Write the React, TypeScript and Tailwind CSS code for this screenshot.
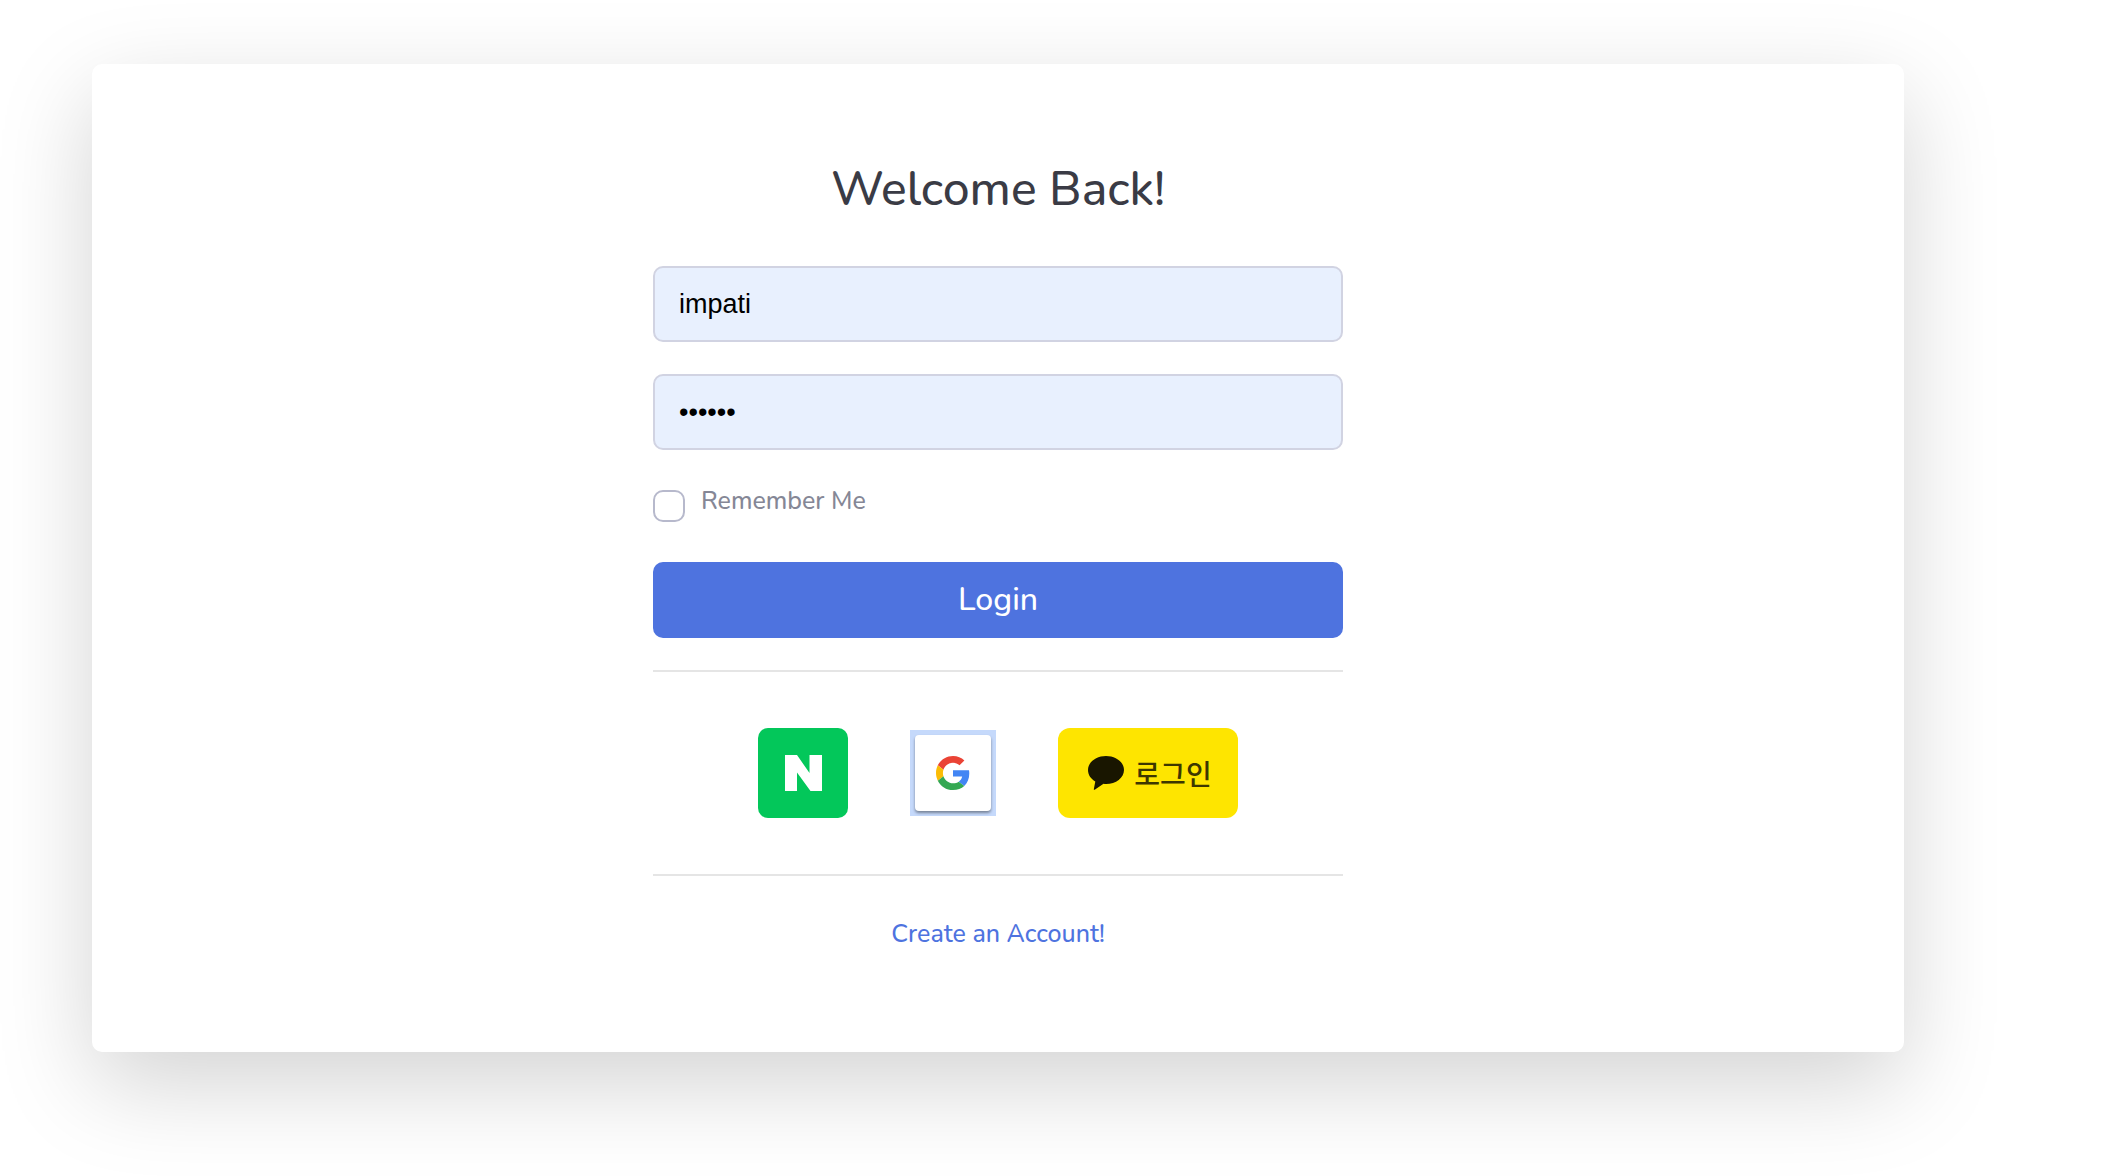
import { useState } from "react";

function NaverMark() {
  return (
    <svg viewBox="0 0 37 36" className="h-9 w-[37px]" aria-hidden="true">
      <path d="M0 0H12L24.5 18V0H37V36H25.5L12 17.500V36H0Z" fill="#fff" />
    </svg>
  );
}

function GoogleMark() {
  return (
    <svg viewBox="0 0 48 48" className="h-[34px] w-[34px]" aria-hidden="true">
      <path fill="#EA4335" d="M24 9.5c3.54 0 6.71 1.22 9.21 3.6l6.85-6.85C35.9 2.38 30.47 0 24 0 14.62 0 6.51 5.38 2.56 13.22l7.98 6.19C12.43 13.72 17.74 9.500 24 9.500z" />
      <path fill="#4285F4" d="M46.98 24.55c0-1.57-.15-3.09-.38-4.55H24v9.02h12.94c-.58 2.96-2.26 5.48-4.78 7.180l7.730 6c4.510-4.180 7.090-10.360 7.090-17.650z" />
      <path fill="#FBBC05" d="M10.530 28.590c-.480-1.450-.760-2.990-.760-4.590s.270-3.140.760-4.590l-7.980-6.190C.920 16.460 0 20.120 0 24c0 3.880.920 7.540 2.560 10.780l7.970-6.190z" />
      <path fill="#34A853" d="M24 48c6.480 0 11.930-2.130 15.890-5.810l-7.730-6c-2.150 1.450-4.920 2.300-8.160 2.300-6.260 0-11.570-4.220-13.470-9.910l-7.980 6.190C6.510 42.620 14.620 48 24 48z" />
    </svg>
  );
}

function KakaoMark() {
  return (
    <svg viewBox="0 0 36 34" className="h-[34px] w-9" aria-hidden="true">
      <path
        d="M18 0C8 0 0 6.200 0 14c0 5 3 9 7.300 11.500L5.800 33.200c0 .6.400.8.900.5L15.500 27.800c.8.100 1.700.200 2.500.200 10 0 18-6.200 18-14S28 0 18 0Z"
        fill="#191600"
      />
    </svg>
  );
}

const fieldClass =
  "h-19 w-full rounded-[10px] border-2 border-[#d1d3e2] bg-[#e8f0fe] px-6 font-['Liberation_Sans',Arial,sans-serif] text-[27px] text-black outline-none";

export default function App() {
  const [user, setUser] = useState("impati");
  const [password, setPassword] = useState("secret");

  return (
    <div className="min-h-screen overflow-hidden bg-white pt-16 pr-[222px] pb-[124px] pl-[92px] font-[Nunito,Lato,sans-serif] font-medium">
      <main className="flex flex-col items-center rounded-[10px] bg-white px-6 pt-24 pb-24 shadow-[0_32px_96px_rgba(0,0,0,0.175)]">
        <div className="flex w-full max-w-[690px] flex-col">
          <h1 className="mb-12 text-center text-[48px] leading-[58px] font-medium text-[#3a3b45]">Welcome Back!</h1>
          <form className="flex flex-col" onSubmit={(e) => e.preventDefault()}>
            <input
              type="text"
              aria-label="Username"
              value={user}
              onChange={(e) => setUser(e.target.value)}
              className={`font-normal ${fieldClass}`}
            />
            <input
              type="password"
              aria-label="Password"
              value={password}
              onChange={(e) => setPassword(e.target.value)}
              className={`mt-8 font-normal ${fieldClass}`}
            />
            <div className="mt-8 flex h-20 gap-4">
              <input
                id="remember"
                type="checkbox"
                className="mt-2 h-8 w-8 appearance-none rounded-[10px] border-2 border-[#b7b9cc] bg-white checked:bg-[#4e73df]"
              />
              <label htmlFor="remember" className="pt-px text-[25px] leading-[36px] text-[#858796]">
                Remember Me
              </label>
            </div>
            <button type="submit" className="h-19 rounded-[10px] bg-[#4e73df] text-[32px] text-white">
              Login
            </button>
          </form>
          <hr className="mt-8 border-t-2 border-[#e5e5e5]" />
          <div className="my-14 flex items-center justify-center gap-[62px]">
            <button
              type="button"
              aria-label="Naver"
              className="flex h-[90px] w-[90px] items-center justify-center rounded-[10px] bg-[#03c75a]"
            >
              <NaverMark />
            </button>
            <button type="button" aria-label="Google" className="bg-[#c5d9fb] p-[5px]">
              <span className="flex h-19 w-19 items-center justify-center rounded bg-white shadow-[0_2px_3px_rgba(0,0,0,0.4)]">
                <GoogleMark />
              </span>
            </button>
            <button
              type="button"
              className="flex h-[90px] w-[180px] items-center justify-center gap-[10px] rounded-xl bg-[#fee500] pl-1 font-['Noto_Sans_CJK_KR',sans-serif] text-[28px] font-medium text-[#3d3700]"
            >
              <KakaoMark />
              로그인
            </button>
          </div>
          <hr className="border-t-2 border-[#e5e5e5]" />
          <a href="#register" className="mt-9 self-center text-[25px] leading-[44px] text-[#4e73df]">
            Create an Account!
          </a>
        </div>
      </main>
    </div>
  );
}
